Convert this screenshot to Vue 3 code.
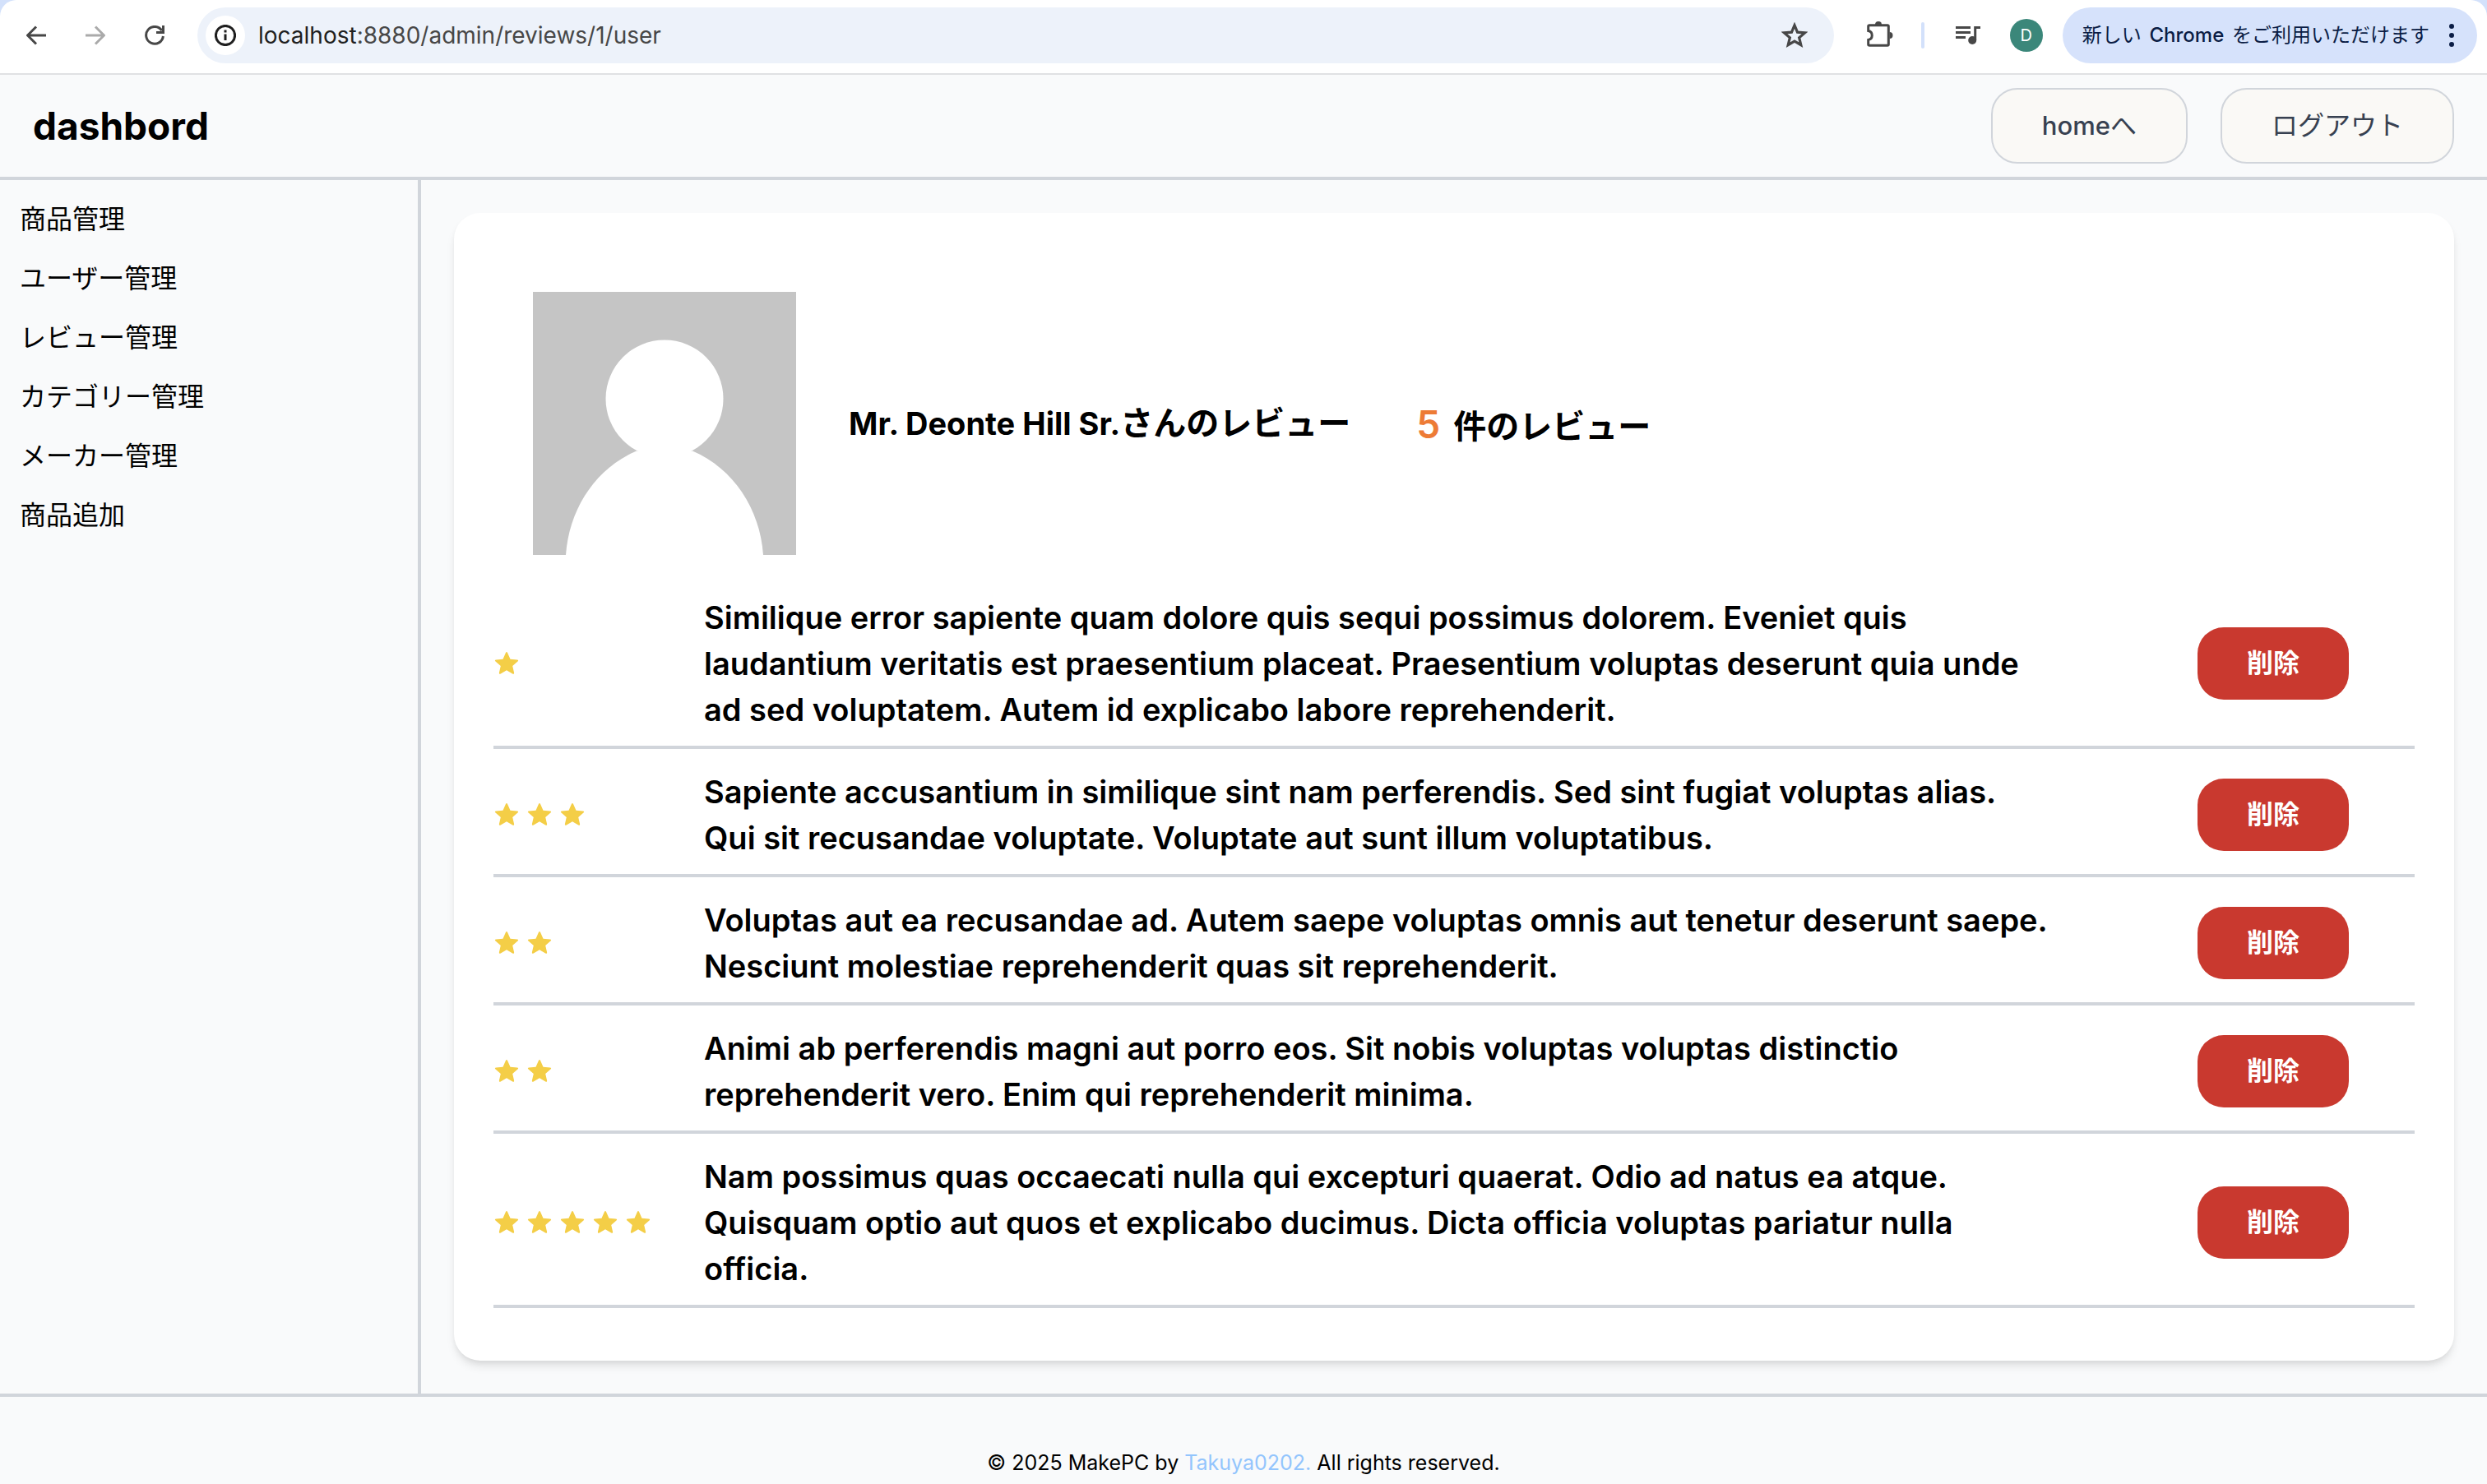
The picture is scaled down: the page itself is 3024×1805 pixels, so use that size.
<script setup>
const menu = ['商品管理', 'ユーザー管理', 'レビュー管理', 'カテゴリー管理', 'メーカー管理', '商品追加']

const reviews = [
  { id: 1, stars: 1, text: 'Similique error sapiente quam dolore quis sequi possimus dolorem. Eveniet quis laudantium veritatis est praesentium placeat. Praesentium voluptas deserunt quia unde ad sed voluptatem. Autem id explicabo labore reprehenderit.' },
  { id: 2, stars: 3, text: 'Sapiente accusantium in similique sint nam perferendis. Sed sint fugiat voluptas alias. Qui sit recusandae voluptate. Voluptate aut sunt illum voluptatibus.' },
  { id: 3, stars: 2, text: 'Voluptas aut ea recusandae ad. Autem saepe voluptas omnis aut tenetur deserunt saepe. Nesciunt molestiae reprehenderit quas sit reprehenderit.' },
  { id: 4, stars: 2, text: 'Animi ab perferendis magni aut porro eos. Sit nobis voluptas voluptas distinctio reprehenderit vero. Enim qui reprehenderit minima.' },
  { id: 5, stars: 5, text: 'Nam possimus quas occaecati nulla qui excepturi quaerat. Odio ad natus ea atque. Quisquam optio aut quos et explicabo ducimus. Dicta officia voluptas pariatur nulla officia.' },
]
</script>

<template>
  <div class="page">
    <div class="browser">
      <div class="toolbar">
        <nav class="history" aria-label="browser">
          <button type="button" class="tool" aria-label="back">
            <svg viewBox="0 0 24 24"><path d="M12 1.5 1.5 12 12 22.5M2 12h22" /></svg>
          </button>
          <button type="button" class="tool faded" aria-label="forward">
            <svg viewBox="0 0 24 24"><path d="M12 1.5 22.5 12 12 22.5M22 12H0" /></svg>
          </button>
          <button type="button" class="tool" aria-label="reload">
            <svg viewBox="0 0 24 24"><path d="M20.8 6.2A10.4 10.4 0 1 0 22.4 13M22.5 0v8.500H14" /></svg>
          </button>
        </nav>
        <div class="address">
          <span class="info">
            <svg viewBox="0 0 26 26"><circle cx="13" cy="13" r="11.600" /><path d="M13 11.500v7.500M13 6.500v3" /></svg>
          </span>
          <p class="url"><span class="host">localhost</span>:8880/admin/reviews/1/user</p>
          <button type="button" class="tool" aria-label="bookmark">
            <svg class="bookmark" viewBox="0 0 30 30"><path d="M15 3.500l3.300 7.900 8.500.7-6.500 5.600 2 8.300-7.300-4.400L7.700 26l2-8.300-6.500-5.600 8.500-.7z" /></svg>
          </button>
        </div>
        <div class="extras">
          <button type="button" class="tool" aria-label="extensions">
            <svg class="puzzle" viewBox="0 0 32 36"><path d="M3.200 5.700H25q1.300 0 1.300 1.300V29q0 1.300-1.300 1.300H3.200q-1.500 0-1.500-1.300V23.500a5.600 5.600 0 0 0 0-11V7q0-1.300 1.500-1.300z" /><path class="solid" d="M10 5a4 4 0 0 1 8 0zM27.500 14a4 4 0 0 1 0 8z" /></svg>
          </button>
          <span class="rule"></span>
          <button type="button" class="tool" aria-label="media">
            <svg class="media" viewBox="0 0 30 22"><path d="M0 1.500h18M0 7.500h18M0 13.500h12M23.700 17V1.500H30" /><circle class="solid" cx="20.200" cy="17" r="5" /></svg>
          </button>
          <span class="profile">D</span>
          <button type="button" class="update">
            <span>新しい <span class="product">Chrome</span> をご利用いただけます</span>
            <svg viewBox="0 0 6 28"><circle cx="3" cy="3" r="3" /><circle cx="3" cy="14" r="3" /><circle cx="3" cy="25" r="3" /></svg>
          </button>
        </div>
      </div>
    </div>

    <header class="header">
      <h1>dashbord</h1>
      <div class="actions">
        <button type="button" class="ghost"><span class="latin">home</span>へ</button>
        <button type="button" class="ghost">ログアウト</button>
      </div>
    </header>

    <div class="body">
      <nav class="sidebar" aria-label="menu">
        <a v-for="item in menu" :key="item" href="#">{{ item }}</a>
      </nav>
      <main class="main">
        <section class="card">
          <div class="person">
            <svg class="avatar" viewBox="0 0 320 320" role="img" aria-label="avatar">
              <rect width="320" height="320" fill="#c5c5c5" />
              <circle cx="160" cy="130" r="71.500" fill="#fff" />
              <path d="M40 320C44 264 76 215 126 193.500H194C244 215 276 264 280 320Z" fill="#fff" />
            </svg>
            <h2><span class="name">Mr. Deonte Hill Sr.</span>さんのレビュー</h2>
            <p class="count"><strong>5</strong>件のレビュー</p>
          </div>
          <ul class="reviews">
            <li v-for="review in reviews" :key="review.id" class="review">
              <div class="stars" role="img" :aria-label="`${review.stars} / 5`">
                <svg v-for="n in review.stars" :key="n" viewBox="0 0 32 32">
                  <path d="M14.800 3.200q1.200-2.200 2.400 0l3.300 7.600 8.300.7q2.300.4.700 2.100l-6.300 5.500 1.900 8.200q.3 2.300-1.900 1.200L16 24.200l-7.200 4.300q-2.200 1.100-1.900-1.200l1.900-8.200-6.300-5.500q-1.600-1.700.7-2.100l8.300-.7z" />
                </svg>
              </div>
              <p class="text">{{ review.text }}</p>
              <button type="button" class="delete">削除</button>
            </li>
          </ul>
        </section>
      </main>
    </div>

    <footer class="footer">© 2025 MakePC by <a href="#">Takuya0202.</a> All rights reserved.</footer>
  </div>
</template>

<style>
body {
  background: #f9fafb;
}
</style>

<style scoped>
* {
  box-sizing: border-box;
  margin: 0;
  padding: 0;
}

.page {
  font-family: Inter, "Noto Sans CJK JP", sans-serif;
  font-size: 32px;
  line-height: 48px;
  color: #000;
}

button {
  border: 0;
  background: none;
  font: inherit;
  color: inherit;
  white-space: nowrap;
}

a {
  color: inherit;
  text-decoration: none;
}

.browser {
  background: #d3e1fb;
}

.toolbar {
  display: flex;
  align-items: center;
  gap: 40px;
  height: 91px;
  padding: 9px 12px 12px 32px;
  border-bottom: 2px solid #e0e1e3;
  border-radius: 20px 20px 0 0;
  background: #fff;
}

.history {
  display: flex;
  gap: 48px;
}

.tool {
  display: flex;
  align-items: center;
  color: #474747;
}

.tool svg {
  width: 24px;
  height: 24px;
  fill: none;
  stroke: currentColor;
  stroke-width: 3;
}

.tool .solid {
  fill: currentColor;
  stroke: none;
}

.faded {
  color: #aaa;
}

.address {
  display: flex;
  flex: 1;
  align-items: center;
  gap: 16px;
  height: 68px;
  padding: 0 32px 0 10px;
  border-radius: 34px;
  background: #edf2fa;
}

.info {
  display: flex;
  align-items: center;
  justify-content: center;
  width: 48px;
  height: 48px;
  border-radius: 50%;
  background: #fff;
}

.info svg {
  width: 26px;
  height: 26px;
  fill: none;
  stroke: #1f1f1f;
  stroke-width: 3;
}

.url {
  flex: 1;
  font-size: 28px;
  color: #474747;
}

.host {
  color: #1f1f1f;
}

.tool .bookmark {
  width: 32px;
  height: 32px;
}

.extras {
  display: flex;
  align-items: center;
}

.tool .puzzle {
  width: 32px;
  height: 36px;
}

.rule {
  width: 4px;
  height: 32px;
  margin: 0 38px 0 34px;
  border-radius: 2px;
  background: #d3e1fb;
}

.tool .media {
  width: 30px;
  height: 22px;
}

.profile {
  width: 40px;
  height: 40px;
  margin: 0 24px 0 36px;
  border-radius: 50%;
  background: #3b877a;
  color: #fff;
  font-size: 20px;
  line-height: 40px;
  text-align: center;
}

.update {
  display: flex;
  align-items: center;
  gap: 24px;
  height: 68px;
  padding: 0 28px 0 24px;
  border-radius: 34px;
  background: #d6e2fb;
  color: #0b1d45;
  font-size: 24px;
}

.product {
  margin: 0 3px;
  font-weight: 500;
}

.update svg {
  width: 6px;
  height: 28px;
  fill: currentColor;
}

.header {
  display: flex;
  align-items: center;
  justify-content: space-between;
  padding: 16px 40px;
  border-bottom: 4px solid #d1d5db;
}

h1 {
  font-size: 46px;
  font-weight: 700;
}

.actions {
  display: flex;
  gap: 40px;
}

.ghost {
  padding: 20px 60px;
  border: 2px solid #d1d5db;
  border-radius: 32px;
  background: #faf9f6;
  color: #374151;
}

.latin {
  font-size: 31px;
  font-weight: 500;
}

.body {
  display: flex;
  border-bottom: 4px solid #d1d5db;
}

.sidebar {
  display: flex;
  flex: 0 0 512px;
  flex-direction: column;
  gap: 24px;
  padding: 24px;
  border-right: 4px solid #d1d5db;
}

.main {
  flex: 1;
  padding: 40px;
}

.card {
  padding: 48px 48px 64px;
  border-radius: 32px;
  background: #fff;
  box-shadow: 0 8px 12px -2px #0000001a, 0 4px 8px -4px #0000001a;
}

.person {
  display: flex;
  align-items: center;
  padding: 48px;
}

.avatar {
  width: 320px;
  height: 320px;
}

h2 {
  margin: 0 80px 0 64px;
  font-size: 40px;
  font-weight: 700;
}

.name {
  font-size: 38px;
}

.count {
  padding-top: 4px;
  font-size: 40px;
  font-weight: 700;
}

.count strong {
  margin-right: 16px;
  color: #ed7b36;
  font-size: 46px;
  font-weight: 600;
}

.reviews {
  list-style: none;
}

.review {
  display: flex;
  align-items: center;
  padding: 24px 80px 16px 0;
  border-bottom: 4px solid #d1d5db;
}

.review:first-child {
  padding-top: 0;
}

.stars {
  display: flex;
  flex: 0 0 256px;
  gap: 8px;
}

.stars svg {
  width: 32px;
  height: 32px;
  fill: #f4ce47;
}

.text {
  flex: 1;
  padding-right: 178px;
  font-size: 38px;
  font-weight: 600;
  line-height: 56px;
}

.delete {
  padding: 20px 60px;
  border-radius: 32px;
  background: #c9392f;
  color: #fff;
  font-weight: 700;
}

.footer {
  padding: 56px 40px 0;
  font-size: 25px;
  text-align: center;
}

.footer a {
  color: #93c5fd;
}
</style>
